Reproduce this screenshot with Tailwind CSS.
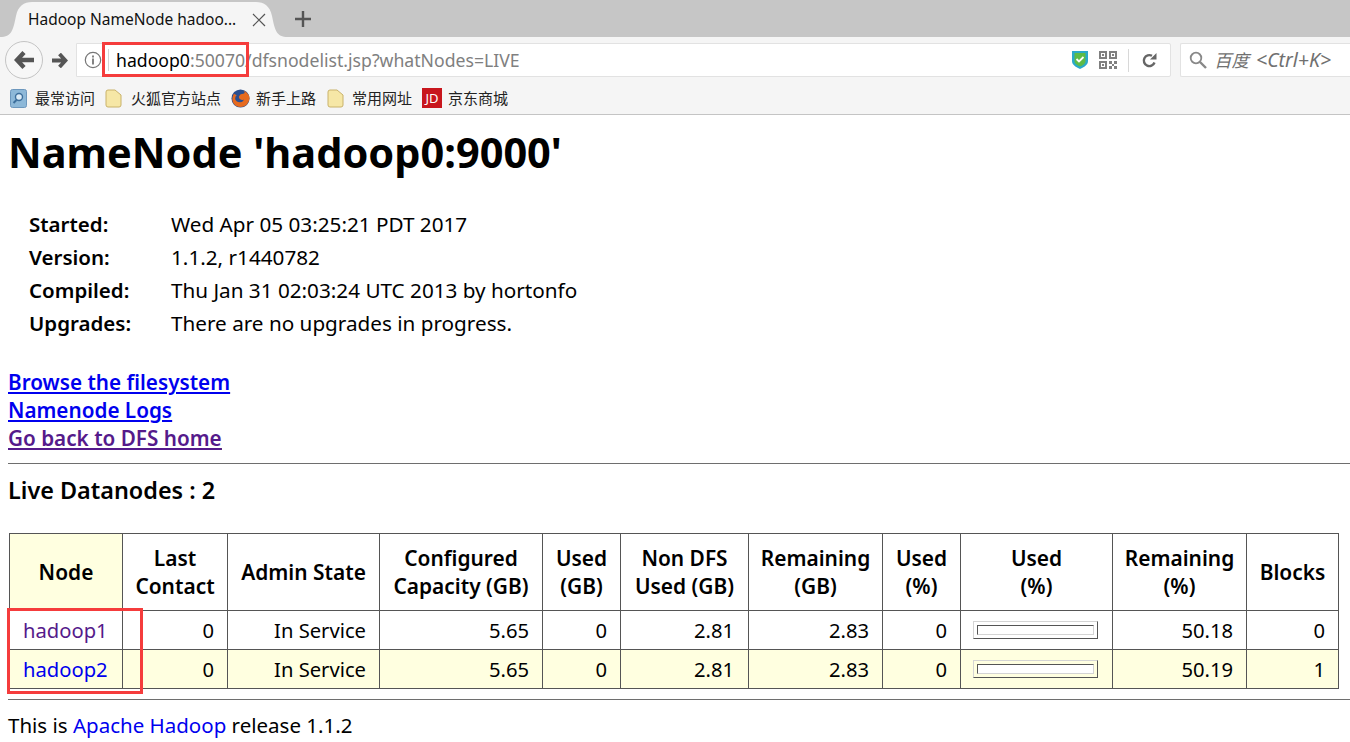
<!DOCTYPE html>
<html lang="en">
  <head>
    <meta charset="UTF-8" />
    <title>Hadoop NameNode hadoop0:9000</title>
    <script src="https://cdn.jsdelivr.net/npm/@tailwindcss/browser@4"></script>
  </head>
  <body class="relative h-[742px] w-[1350px] overflow-hidden bg-white font-['Noto_Sans','Noto_Sans_CJK_SC',sans-serif] text-black">
    <!-- tab bar -->
    <div class="flex h-[37px] items-end bg-[#c6c6c6]">
      <div class="relative flex h-[35px] w-[288px] items-center pl-[28px] text-[15.5px] text-[#111]">
        <svg class="absolute inset-0" width="288" height="35" viewBox="0 0 288 35"><path d="M0 35C12 35 13 28 16 14 18 4 24 0 32 0H256C264 0 270 4 272 14 275 28 276 35 288 35Z" fill="#f5f5f5"/></svg>
        <span class="relative w-[216px] whitespace-nowrap">Hadoop NameNode hadoo...</span>
        <svg class="relative ml-[8px]" width="14" height="14" viewBox="0 0 14 14"><path d="M1 1l12 12M13 1L1 13" stroke="#555" stroke-width="1.2" fill="none"/></svg>
      </div>
      <svg class="mb-[10px] ml-[7px]" width="16" height="16" viewBox="0 0 16 16"><path d="M8 0v16M0 8h16" stroke="#555" stroke-width="2.4" fill="none"/></svg>
    </div>

    <!-- address bar -->
    <div class="flex h-[45px] items-center bg-[#f5f5f5] pt-[1px]">
      <div class="ml-[5px] flex h-[34px] w-[1166px] items-center">
        <div class="z-10 flex h-[38px] w-[38px] shrink-0 items-center justify-center rounded-full border border-[#c4c4c4] bg-[#f7f7f7]">
          <svg width="20" height="18" viewBox="0 0 20 18"><path d="M10 1.500L3 9l7 7.500M3.500 9H20" stroke="#555" stroke-width="4.400" fill="none"/></svg>
        </div>
        <div class="flex h-[34px] w-[33px] shrink-0 items-center justify-center">
          <svg width="16" height="15" viewBox="0 0 16 15"><path d="M7.500 1l6 6.500-6 6.500M13 7.500H0" stroke="#555" stroke-width="3.800" fill="none"/></svg>
        </div>
        <div class="flex h-[34px] flex-1 items-center rounded-r-[2px] border border-[#e2e2e2] bg-white pr-[13px]">
          <svg class="ml-[7px]" width="18" height="18" viewBox="0 0 18 18"><circle cx="9" cy="9" r="7.700" stroke="#777" stroke-width="1.200" fill="none"/><path d="M9 7.500v6M9 4.500v2" stroke="#777" stroke-width="1.800"/></svg>
          <div class="ml-[6px] h-[22px] w-px bg-[#d4d4d4]"></div>
          <span class="ml-[7px] text-[17.650px] whitespace-nowrap text-[#808080]"><span class="text-black">hadoop0</span>:50070/dfsnodelist.jsp?whatNodes=LIVE</span>
          <svg class="ml-auto" width="18" height="20" viewBox="0 0 18 20"><path d="M1 1h16v10c0 4-4 6-8 8-4-2-8-4-8-8z" fill="#2aa9c9"/><path d="M3.500 3h11v8c0 3-3 4.500-5.500 5.500C6.500 15.500 3.500 14 3.500 11z" fill="#5dbb46"/><path d="M5.500 9l2.500 2.500 4.500-4.500" stroke="#fff" stroke-width="1.800" fill="none"/></svg>
          <svg class="ml-[10px]" width="18" height="18" viewBox="0 0 18 18" fill="#808080"><path d="M0 0h8v8H0zM2 2v4h4V2zM10 0h8v8h-8zM12 2v4h4V2zM0 10h8v8H0zM2 12v4h4v-4z" fill-rule="evenodd"/><path d="M10 10h3v3h-3zM15 10h3v3h-3zM13 13h2v2h-2zM10 15h3v3h-3zM15 15h3v3h-3z"/><path d="M3 3h2v2H3zM13 3h2v2h-2zM3 13h2v2H3z"/></svg>
          <div class="ml-[11px] h-[23px] w-px bg-[#d8d8d8]"></div>
          <svg class="ml-[13px]" width="15" height="15" viewBox="0 0 15 15"><path d="M12.500 9.500A5.500 5.500 0 1 1 10 2.800" stroke="#666" stroke-width="2.400" fill="none"/><path d="M8 6.500h6.500V0z" fill="#666"/></svg>
        </div>
      </div>
      <div class="ml-[9px] flex h-[34px] flex-1 items-center rounded-l-[2px] border-y border-l border-[#e2e2e2] bg-white">
        <svg class="ml-[8px]" width="18" height="18" viewBox="0 0 18 18"><circle cx="7" cy="7" r="5.300" stroke="#888" stroke-width="1.800" fill="none"/><path d="M11 11l6 6" stroke="#888" stroke-width="2.400"/></svg>
        <span class="ml-[7px] text-[17.500px] whitespace-nowrap text-[#707070] italic">百度</span>
        <span class="ml-[7px] text-[19.500px] whitespace-nowrap text-[#707070] italic">&lt;Ctrl+K&gt;</span>
      </div>
    </div>

    <!-- bookmarks -->
    <div class="flex h-[33px] items-center border-b border-[#c4c4c4] bg-[#f5f5f5] text-[15px] text-[#222]">
      <svg class="ml-[10px]" width="17" height="19" viewBox="0 0 17 19"><rect x="0.500" y="0.500" width="16" height="18" rx="2" fill="#8db8d8" stroke="#6c97bd"/><circle cx="9" cy="8" r="3.500" fill="#dcecf7" stroke="#3d6f9c" stroke-width="1.400"/><path d="M6.500 11l-3 3" stroke="#3d6f9c" stroke-width="2"/></svg>
      <span class="ml-[8px] w-[60px] whitespace-nowrap">最常访问</span>
      <svg class="ml-[10px]" width="17" height="19" viewBox="0 0 17 19"><path d="M1 3q0-2 2-2h7l6 5v10q0 2-2 2H3q-2 0-2-2z" fill="#f6e7a6" stroke="#c9b26a"/></svg>
      <span class="ml-[9px] w-[90px] whitespace-nowrap">火狐官方站点</span>
      <svg class="ml-[10px]" width="19" height="19" viewBox="0 0 20 20"><circle cx="10" cy="10" r="9.500" fill="#2b4f90"/><path d="M3 5q-4 8 2 12.500 6 3.500 11.500-1 4.500-5 2.300-10-2-3.500-5.300-5 2 3-.5 3.500-3.500 0-4.500 2.500-1 3 3 4 2 .5 2-1 0 3-4 3.500-4-.5-5-3-.5-3 1.500-4.500z" fill="#e66a1f"/></svg>
      <span class="ml-[6px] w-[60px] whitespace-nowrap">新手上路</span>
      <svg class="ml-[11px]" width="17" height="19" viewBox="0 0 17 19"><path d="M1 3q0-2 2-2h7l6 5v10q0 2-2 2H3q-2 0-2-2z" fill="#f6e7a6" stroke="#c9b26a"/></svg>
      <span class="ml-[8px] w-[60px] whitespace-nowrap">常用网址</span>
      <div class="ml-[10px] flex h-[20px] w-[20px] items-center justify-center bg-[#c8161d] text-[13px] leading-none text-white">JD</div>
      <span class="ml-[6px] whitespace-nowrap">京东商城</span>
    </div>

    <!-- page content -->
    <main class="pl-[8px]">
      <h1 class="mt-[11px] text-[41.500px] leading-[52px] font-bold whitespace-nowrap">NameNode 'hadoop0:9000'</h1>

      <div class="mt-[30px] ml-[21px] grid grid-cols-[142px_1fr] text-[20.700px] leading-[33px]">
        <b class="text-[20.500px] font-semibold">Started:</b><span>Wed Apr 05 03:25:21 PDT 2017</span>
        <b class="text-[20.500px] font-semibold">Version:</b><span>1.1.2, r1440782</span>
        <b class="text-[20.500px] font-semibold">Compiled:</b><span>Thu Jan 31 02:03:24 UTC 2013 by hortonfo</span>
        <b class="text-[20.500px] font-semibold">Upgrades:</b><span>There are no upgrades in progress.</span>
      </div>

      <div class="mt-[28px] flex flex-col items-start text-[20.700px] leading-[28px] font-semibold underline">
        <a href="#" class="text-[#0000ee]">Browse the filesystem</a>
        <a href="#" class="text-[#0000ee]">Namenode Logs</a>
        <a href="#" class="text-[#551a8b]">Go back to DFS home</a>
      </div>

      <hr class="mt-[11px] border-[#6e6e6e]" />
      <h3 class="mt-[11px] text-[23.400px] leading-[30px] font-semibold">Live Datanodes : 2</h3>

      <table class="mt-[28px] ml-px w-[1330px] table-fixed border-collapse text-[20.200px] leading-[28px]">
        <colgroup>
          <col class="w-[113px]" /><col class="w-[105px]" /><col class="w-[152px]" /><col class="w-[163px]" /><col class="w-[78px]" /><col class="w-[128px]" /><col class="w-[134px]" /><col class="w-[78px]" /><col class="w-[152px]" /><col class="w-[134px]" /><col class="w-[92px]" />
        </colgroup>
        <thead class="text-[20.900px]">
          <tr class="h-[77px] text-center">
            <th class="border border-[#555] bg-[#ffffe0] font-semibold">Node</th>
            <th class="border border-[#555] font-semibold">Last<br />Contact</th>
            <th class="border border-[#555] font-semibold">Admin State</th>
            <th class="border border-[#555] font-semibold">Configured<br />Capacity (GB)</th>
            <th class="border border-[#555] font-semibold">Used<br />(GB)</th>
            <th class="border border-[#555] font-semibold">Non DFS<br />Used (GB)</th>
            <th class="border border-[#555] font-semibold">Remaining<br />(GB)</th>
            <th class="border border-[#555] font-semibold">Used<br />(%)</th>
            <th class="border border-[#555] font-semibold">Used<br />(%)</th>
            <th class="border border-[#555] font-semibold">Remaining<br />(%)</th>
            <th class="border border-[#555] font-semibold">Blocks</th>
          </tr>
        </thead>
        <tbody class="text-right">
          <tr class="h-[39px]">
            <td class="border border-[#555] px-[13px] text-left"><a href="#" class="text-[#551a8b]">hadoop1</a></td>
            <td class="border border-[#555] px-[13px]">0</td>
            <td class="border border-[#555] px-[13px]">In Service</td>
            <td class="border border-[#555] px-[13px]">5.65</td>
            <td class="border border-[#555] px-[13px]">0</td>
            <td class="border border-[#555] px-[14px]">2.81</td>
            <td class="border border-[#555] px-[13px]">2.83</td>
            <td class="border border-[#555] px-[13px]">0</td>
            <td class="border border-[#555] px-[12px]">
              <div class="h-[18px] w-[125px] border border-t-[#d4d4d4] border-r-[#555] border-b-[#555] border-l-[#d4d4d4] p-[3px]">
                <div class="h-[10px] border border-t-[#555] border-r-[#d4d4d4] border-b-[#d4d4d4] border-l-[#555] bg-white"></div>
              </div>
            </td>
            <td class="border border-[#555] px-[13px]">50.18</td>
            <td class="border border-[#555] px-[13px]">0</td>
          </tr>
          <tr class="h-[39px] bg-[#ffffe0]">
            <td class="border border-[#555] px-[13px] text-left"><a href="#" class="text-[#0000ee]">hadoop2</a></td>
            <td class="border border-[#555] px-[13px]">0</td>
            <td class="border border-[#555] px-[13px]">In Service</td>
            <td class="border border-[#555] px-[13px]">5.65</td>
            <td class="border border-[#555] px-[13px]">0</td>
            <td class="border border-[#555] px-[14px]">2.81</td>
            <td class="border border-[#555] px-[13px]">2.83</td>
            <td class="border border-[#555] px-[13px]">0</td>
            <td class="border border-[#555] px-[12px]">
              <div class="h-[18px] w-[125px] border border-t-[#d4d4d4] border-r-[#555] border-b-[#555] border-l-[#d4d4d4] p-[3px]">
                <div class="h-[10px] border border-t-[#555] border-r-[#d4d4d4] border-b-[#d4d4d4] border-l-[#555] bg-white"></div>
              </div>
            </td>
            <td class="border border-[#555] px-[13px]">50.19</td>
            <td class="border border-[#555] px-[13px]">1</td>
          </tr>
        </tbody>
      </table>

      <hr class="mt-[10px] border-[#6e6e6e]" />
      <p class="mt-[11px] text-[20.500px] leading-[28px] whitespace-nowrap">This is <a href="#" class="text-[#0000ee]">Apache Hadoop</a> release 1.1.2</p>
    </main>

    <!-- red annotations drawn on the screenshot -->
    <div class="absolute top-[42px] left-[102px] h-[35px] w-[147px] border-[3px] border-[#f53c3c]"></div>
    <div class="absolute top-[608px] left-[7px] h-[86px] w-[136px] border-[3px] border-[#f53c3c]"></div>
  </body>
</html>
